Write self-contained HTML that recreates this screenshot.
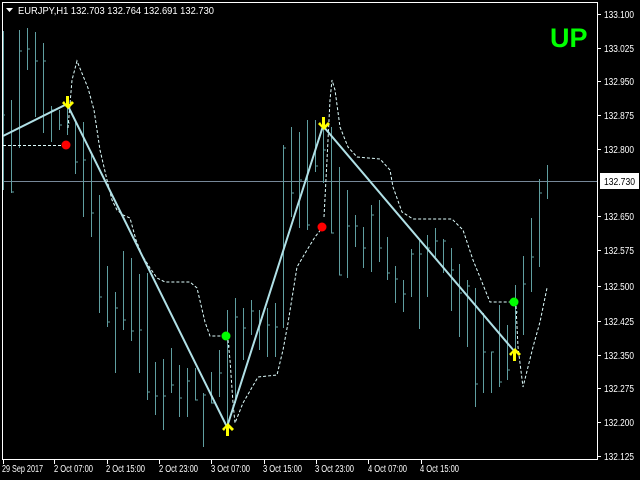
<!DOCTYPE html>
<html><head><meta charset="utf-8"><style>
html,body{margin:0;padding:0;background:#000;width:640px;height:480px;overflow:hidden}
svg{display:block}
text{font-family:"Liberation Sans",sans-serif;fill:#fff;font-size:10px}
</style></head><body>
<svg width="640" height="480" xmlns="http://www.w3.org/2000/svg">
<rect width="640" height="480" fill="#000"/>
<line x1="3" y1="181.5" x2="598" y2="181.5" stroke="#778899" stroke-width="1"/>
<g stroke="#5f9ea0" stroke-width="1">
<path d="M3.5 31V190M11.5 100V193M19.5 30V148M27.5 28V70M35.5 32V117M43.5 43V133M51.5 106V142M59.5 110V130M67.5 108V135M75.5 122V174M83.5 122V217M91.5 155V237M99.5 195V313M107.5 266V327M115.5 292V373M123.5 251V330M131.5 258V341M139.5 274V373M147.5 273V400M155.5 362V415M163.5 359V430M171.5 348V393M179.5 365V417M187.5 368V417M195.5 368V400M203.5 393V447M211.5 372V403M219.5 350V397M227.5 310V427M235.5 298V403M243.5 308V360M251.5 300V335M259.5 310V350M267.5 308V357M275.5 303V357M283.5 145V328M291.5 127V217M299.5 132V228M307.5 120V230M315.5 120V172M323.5 128V183M331.5 127V233M339.5 167V275M347.5 190V278M355.5 215V247M363.5 227V268M371.5 205V272M379.5 200V262M387.5 237V280M395.5 266V303M403.5 280V312M411.5 249V297M419.5 240V329M427.5 235V297M435.5 228V257M443.5 239V273M451.5 248V311M459.5 264V337M467.5 280V347M475.5 288V407M483.5 313V393M491.5 352V393M499.5 305V387M507.5 325V380M515.5 285V350M523.5 256V335M531.5 218V292M539.5 179V267M547.5 165V199"/>
<path d="M3 115h2M11 192h3M19 51h3M27 49h3M35 61h3M43 61h3M51 110h3M59 125h3M67 123h3M75 162h3M83 160h3M91 213h3M99 297h3M107 322h3M115 308h3M123 320h3M131 331h3M139 330h3M147 392h3M155 396h3M163 396h3M171 385h3M179 398h3M187 381h3M195 400h3M203 395h3M211 403h3M219 373h3M227 346h3M235 317h3M243 328h3M251 311h3M259 320h3M267 325h3M275 327h3M283 148h3M291 193h3M299 180h3M307 225h3M315 166h3M323 150h3M331 233h3M339 275h3M347 226h3M355 226h3M363 248h3M371 215h3M379 248h3M387 273h3M395 279h3M403 294h3M411 254h3M419 254h3M427 248h3M435 241h3M443 241h3M451 270h3M459 293h3M467 286h3M475 384h3M483 352h3M491 352h3M499 382h3M507 370h3M515 312h3M523 284h3M531 257h3M539 193h3"/>
</g>
<g fill="none" stroke="#e0ffff" stroke-width="1" stroke-dasharray="3,2">
<path d="M3 145.5H62"/>
<path d="M68 128L72 80L77 61L88 88L94 110L100 150L107 180L112 200L117 210L123 215L130 218L136 240L142 255L150 268L157 278L165 282L190 282L197 288L205 322L210 336L226 336"/>
<path d="M228 340L230 360L233 403L235 423L243 403L258 377L277 375L283 350L288 323L297 267L307 250L315 237L322 228"/>
<path d="M324 217L327 160L330 100L332 80L335 90L340 127L348 147L357 157L380 159L390 170L393 187L402 212L413 219L452 219L463 230L473 260L490 302L514 302"/>
<path d="M516 306L518 347L523 387L533 347L540 322L547 288"/>
</g>
<polyline points="3,136 67,104 227,427 323,126 515,352" fill="none" stroke="#b0e0e6" stroke-width="2"/>
<circle cx="66" cy="145" r="4.5" fill="#ff0000"/>
<circle cx="322" cy="227" r="4.5" fill="#ff0000"/>
<circle cx="226" cy="336" r="4.5" fill="#00ff00"/>
<circle cx="514" cy="302" r="4.5" fill="#00ff00"/>
<g fill="#ffff00">
<path d="M66 96h3v8l3-3 2 2-6 6-6-6 2-2 2 3z"/>
<path d="M322 117h3v8l3-3 2 2-6 6-6-6 2-2 2 3z"/>
<path d="M226 436h3v-8l3 3 2-2-6-6-6 6 2 2 2-3z"/>
<path d="M513 361h3v-8l3 3 2-2-6-6-6 6 2 2 2-3z"/>
</g>
<g stroke="#fff" stroke-width="1" fill="none">
<path d="M2.5 2.5H597.5V459.5H2.5Z"/>
<path d="M598 14.5h3M598 48.5h3M598 81.5h3M598 115.5h3M598 149.5h3M598 216.5h3M598 250.5h3M598 286.5h3M598 321.5h3M598 355.5h3M598 388.5h3M598 422.5h3M598 456.5h3"/>
<path d="M3.5 460v4M54.5 460v4M107.5 460v4M159.5 460v4M211.5 460v4M264.5 460v4M316.5 460v4M368.5 460v4M421.5 460v4"/>
</g>
<g>
<text x="604" y="18" textLength="30" lengthAdjust="spacingAndGlyphs">133.100</text>
<text x="604" y="52" textLength="30" lengthAdjust="spacingAndGlyphs">133.025</text>
<text x="604" y="85" textLength="30" lengthAdjust="spacingAndGlyphs">132.950</text>
<text x="604" y="119" textLength="30" lengthAdjust="spacingAndGlyphs">132.875</text>
<text x="604" y="153" textLength="30" lengthAdjust="spacingAndGlyphs">132.800</text>
<text x="604" y="220" textLength="30" lengthAdjust="spacingAndGlyphs">132.650</text>
<text x="604" y="254" textLength="30" lengthAdjust="spacingAndGlyphs">132.575</text>
<text x="604" y="290" textLength="30" lengthAdjust="spacingAndGlyphs">132.500</text>
<text x="604" y="325" textLength="30" lengthAdjust="spacingAndGlyphs">132.425</text>
<text x="604" y="359" textLength="30" lengthAdjust="spacingAndGlyphs">132.350</text>
<text x="604" y="392" textLength="30" lengthAdjust="spacingAndGlyphs">132.275</text>
<text x="604" y="426" textLength="30" lengthAdjust="spacingAndGlyphs">132.200</text>
<text x="604" y="460" textLength="30" lengthAdjust="spacingAndGlyphs">132.125</text>
</g>
<rect x="600.5" y="173.5" width="38" height="15" fill="#fff" stroke="#fff"/>
<text x="604" y="185" style="fill:#000" textLength="31" lengthAdjust="spacingAndGlyphs">132.730</text>
<g style="font-size:9.5px">
<text x="2" y="472" textLength="41" lengthAdjust="spacingAndGlyphs">29 Sep 2017</text>
<text x="54" y="472" textLength="39" lengthAdjust="spacingAndGlyphs">2 Oct 07:00</text>
<text x="106" y="472" textLength="39" lengthAdjust="spacingAndGlyphs">2 Oct 15:00</text>
<text x="159" y="472" textLength="39" lengthAdjust="spacingAndGlyphs">2 Oct 23:00</text>
<text x="211" y="472" textLength="39" lengthAdjust="spacingAndGlyphs">3 Oct 07:00</text>
<text x="263" y="472" textLength="39" lengthAdjust="spacingAndGlyphs">3 Oct 15:00</text>
<text x="315" y="472" textLength="39" lengthAdjust="spacingAndGlyphs">3 Oct 23:00</text>
<text x="368" y="472" textLength="39" lengthAdjust="spacingAndGlyphs">4 Oct 07:00</text>
<text x="420" y="472" textLength="39" lengthAdjust="spacingAndGlyphs">4 Oct 15:00</text>
</g>
<path d="M6 8h7l-3.5 4z" fill="#fff"/>
<text x="18" y="14" textLength="196" lengthAdjust="spacingAndGlyphs">EURJPY,H1  132.703 132.764 132.691 132.730</text>
<text x="550" y="47" style="fill:#00ff00;font-size:27px;font-weight:bold">UP</text>
</svg>
</body></html>
